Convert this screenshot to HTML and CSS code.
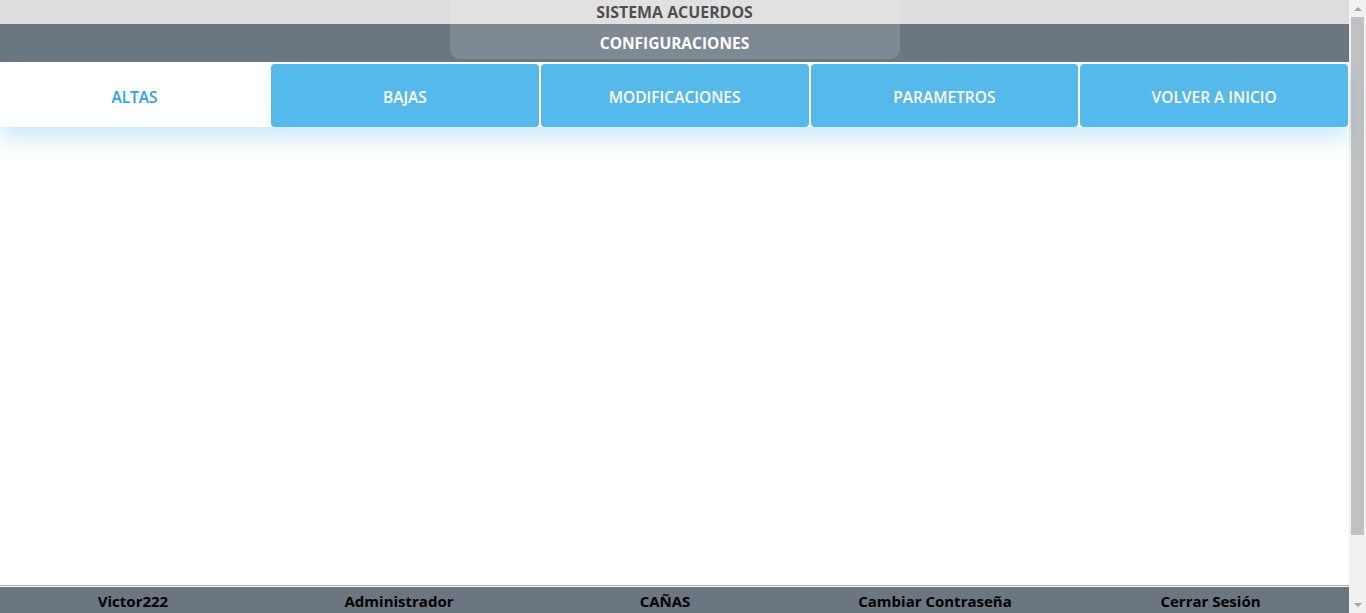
FILE: index.html
```html
<!DOCTYPE html>
<html lang="es">
<head>
<meta charset="utf-8">
<title>Sistema Acuerdos - Configuraciones</title>
<link rel="stylesheet" href="styles.css">
</head>
<body>
<div class="page">
  <header class="header">
    <div class="title-bar">SISTEMA ACUERDOS</div>
    <div class="section-bar">CONFIGURACIONES</div>
    <div class="title-glass"></div>
  </header>
  <nav class="tabs">
    <a class="tab tab-active">ALTAS</a>
    <a class="tab">BAJAS</a>
    <a class="tab">MODIFICACIONES</a>
    <a class="tab">PARAMETROS</a>
    <a class="tab">VOLVER A INICIO</a>
  </nav>
  <main class="content"></main>
  <footer class="footer">
    <span class="footer-item">Victor222</span>
    <span class="footer-item">Administrador</span>
    <span class="footer-item">CAÑAS</span>
    <span class="footer-item">Cambiar Contraseña</span>
    <span class="footer-item">Cerrar Sesión</span>
  </footer>
</div>
<div class="scrollbar">
  <div class="sb-arrow"><span class="sb-up"></span></div>
  <div class="sb-track"><div class="sb-thumb"></div></div>
  <div class="sb-arrow"><span class="sb-down"></span></div>
</div>
</body>
</html>
```
FILE: styles.css
```css
html, body {
  margin: 0;
  padding: 0;
  height: 100%;
  overflow: hidden;
}
body {
  display: flex;
  font-family: "Open Sans", "Noto Sans", sans-serif;
  background: #ffffff;
}
.page {
  flex: 1;
  display: flex;
  flex-direction: column;
  min-width: 0;
}
.header {
  position: relative;
}
.title-bar {
  height: 24px;
  line-height: 25px;
  background: #dddddd;
  color: #333333;
  font-weight: 700;
  font-size: 15.9px;
  text-align: center;
}
.section-bar {
  height: 38px;
  line-height: 38px;
  background: #6b7680;
  color: #ffffff;
  font-weight: 700;
  font-size: 15.5px;
  text-align: center;
}
.title-glass {
  position: absolute;
  top: 0;
  left: 450px;
  width: 450px;
  height: 59px;
  background: rgba(255, 255, 255, 0.14);
  border-radius: 0 0 9px 9px;
  pointer-events: none;
}
.tabs {
  display: grid;
  grid-template-columns: 269px 1fr 1fr 1fr 1fr;
  gap: 2px;
  padding: 2px 1px 0 0;
  height: 63px;
  box-shadow: 0 12px 22px rgba(86, 185, 235, 0.3);
  position: relative;
}
.tab {
  display: flex;
  align-items: center;
  justify-content: center;
  padding-top: 2px;
  background: #56b9eb;
  color: #ffffff;
  font-weight: 600;
  font-size: 15.5px;
  border-radius: 4px;
  cursor: pointer;
}
.tab-active {
  background: #ffffff;
  color: #2ba0ee;
  font-weight: 600;
  border-radius: 0 4px 4px 0;
}
.content {
  flex: 1;
}
.footer {
  height: 26px;
  display: grid;
  grid-template-columns: 266px 266px 266px 274px 1fr;
  border-top: 1px solid #a8a8a8;
  box-shadow: inset 0 1px 0 #ffffff;
  padding-top: 1px;
  background: #6b7680;
  color: #000000;
  font-weight: 700;
  font-size: 15px;
  line-height: 29px;
}
.footer-item {
  text-align: center;
  white-space: nowrap;
}
.scrollbar {
  width: 17px;
  flex: none;
  display: flex;
  flex-direction: column;
  background: #f1f1f1;
}
.sb-arrow {
  height: 17px;
  display: flex;
  align-items: center;
  justify-content: center;
}
.sb-up {
  width: 0;
  height: 0;
  border-left: 4px solid transparent;
  border-right: 4px solid transparent;
  border-bottom: 4px solid #a3a3a3;
}
.sb-down {
  width: 0;
  height: 0;
  border-left: 4px solid transparent;
  border-right: 4px solid transparent;
  border-top: 4px solid #a3a3a3;
}
.sb-track {
  flex: 1;
  padding: 0 2px 61px;
  display: flex;
}
.sb-thumb {
  flex: 1;
  background: #c1c1c1;
}
```
